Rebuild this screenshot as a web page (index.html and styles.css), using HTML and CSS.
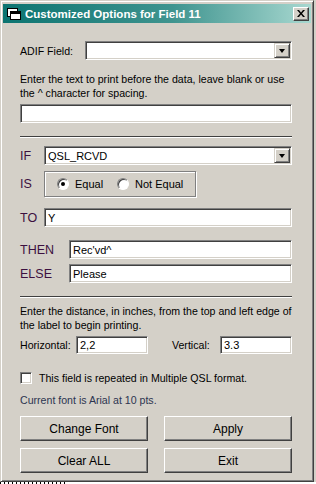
FILE: index.html
```html
<!DOCTYPE html>
<html lang="en">

<head>
  <meta charset="UTF-8" />
  <title>Customized Options for Field 11</title>
  <link rel="stylesheet" href="styles.css">
</head>

<body>
  <div class="desk">
    <div class="window">
      <div class="titlebar">
        <svg class="ticon" width="14" height="12" viewBox="0 0 14 12">
          <rect x="0.5" y="0.5" width="10" height="8" fill="#fff" stroke="#000" />
          <rect x="3.5" y="3.5" width="10" height="8" fill="#fff" stroke="#000" />
          <rect x="4" y="4" width="9" height="2" fill="#000" />
        </svg>
        <span class="title">Customized Options for Field 11</span>
        <span class="close">
          <svg width="8" height="7" viewBox="0 0 8 7">
            <path d="M0 0h2l2 2.5L6 0h2L5 3.5 8 7H6L4 4.5 2 7H0l3-3.5z" fill="#000" />
          </svg>
        </span>
      </div>

      <div class="content">
        <div class="row adif">
          <label class="lbl-adif">ADIF Field:</label>
          <div class="combo"><span class="val"></span><span class="arrow"></span></div>
        </div>

        <p class="note first">Enter the text to print before the data, leave blank or use<br>the ^ character for spacing.</p>
        <div class="field wide"></div>

        <div class="sep sep1"></div>

        <div class="row cond if">
          <label class="key">IF</label>
          <div class="combo"><span class="val">QSL_RCVD</span><span class="arrow"></span></div>
        </div>

        <div class="row cond is">
          <label class="key">IS</label>
          <div class="group">
            <span class="opt opt-eq"><span class="radio on"></span>Equal</span>
            <span class="opt"><span class="radio"></span>Not Equal</span>
          </div>
        </div>

        <div class="row cond to">
          <label class="key">TO</label>
          <div class="field">Y</div>
        </div>

        <div class="row cond then">
          <label class="key long">THEN</label>
          <div class="field">Rec'vd^</div>
        </div>

        <div class="row cond else">
          <label class="key long">ELSE</label>
          <div class="field">Please</div>
        </div>

        <div class="sep sep2"></div>

        <p class="note second">Enter the distance, in inches, from the top and left edge of<br>the label to begin printing.</p>

        <div class="row pos">
          <label class="lbl-h">Horizontal:</label>
          <div class="field small">2,2</div>
          <label class="lbl-v">Vertical:</label>
          <div class="field small">3.3</div>
        </div>

        <div class="row check">
          <span class="box"></span>
          <span>This field is repeated in Multiple QSL format.</span>
        </div>

        <p class="curfont">Current font is Arial at 10 pts.</p>

        <div class="buttons">
          <button>Change Font</button>
          <button>Apply</button>
          <button>Clear ALL</button>
          <button>Exit</button>
        </div>
      </div>
    </div>
    <div class="floor"></div>
  </div>
</body>

</html>
```

FILE: styles.css
```css
* {
  box-sizing: border-box;
}

html,
body {
  margin: 0;
}

body {
  background: #d4d0c8;
  font-family: "Liberation Sans", Arial, sans-serif;
  font-size: 10.6px;
  color: #000;
  overflow: hidden;
}

.desk {
  width: 316px;
  height: 484px;
  display: flex;
  flex-direction: column;
}

.window {
  width: 314px;
  height: 482px;
  flex-shrink: 0;
  background: #d4d0c8;
  border: 1px solid;
  border-color: #d4d0c8 #404040 #404040 #d4d0c8;
  box-shadow: inset 1px 1px #fff, inset -1px -1px #808080;
  padding: 3px 2px;
  display: flex;
  flex-direction: column;
}

.floor {
  height: 2px;
  width: 316px;
  flex-shrink: 0;
  background: #fff;
  background-image: repeating-linear-gradient(to right, #000 0 1px, #fff 1px 4px);
  background-size: 68px 2px;
  background-repeat: no-repeat;
}

/* title bar */
.titlebar {
  height: 19px;
  flex-shrink: 0;
  background: linear-gradient(to right, #0c7471, #3f948f 55%, #a8d8d0);
  display: flex;
  align-items: center;
  padding: 0 2px 0 4px;
}

.ticon {
  flex-shrink: 0;
}

.title {
  color: #fff;
  font-weight: bold;
  font-size: 11.5px;
  margin-left: 4px;
  flex: 1;
  white-space: nowrap;
}

.close {
  width: 16px;
  height: 14px;
  background: #d4d0c8;
  border: 1px solid;
  border-color: #fff #404040 #404040 #fff;
  box-shadow: inset -1px -1px #808080;
  display: flex;
  align-items: center;
  justify-content: center;
}

/* content */
.content {
  padding: 0 19px 0 17px;
  display: flex;
  flex-direction: column;
}

.row {
  display: flex;
  align-items: center;
  white-space: nowrap;
}

.adif {
  margin-top: 18px;
}

.lbl-adif {
  width: 65px;
  flex-shrink: 0;
}

.combo,
.field {
  height: 19px;
  flex-shrink: 0;
  background: #fff;
  border: 1px solid;
  border-color: #808080 #fff #fff #808080;
  box-shadow: inset 1px 1px #404040, inset -1px -1px #d4d0c8;
  display: flex;
  align-items: center;
  padding: 0 2px 0 3px;
  flex: 1;
  font-size: 11px;
}

.combo .val {
  flex: 1;
}

.arrow {
  width: 16px;
  height: 15px;
  background: #d4d0c8;
  border: 1px solid;
  border-color: #d4d0c8 #404040 #404040 #d4d0c8;
  box-shadow: inset 1px 1px #fff, inset -1px -1px #808080;
  margin-right: -1px;
  display: flex;
  align-items: center;
  justify-content: center;
}

.arrow::after {
  content: "";
  border-left: 3.5px solid transparent;
  border-right: 3.5px solid transparent;
  border-top: 4px solid #000;
  margin-top: 1px;
}

.note {
  margin: 0;
  line-height: 14px;
  white-space: nowrap;
}

.note.first {
  margin-top: 12px;
}

.field.wide {
  flex: none;
  margin-top: 4px;
}

.sep {
  height: 2px;
  flex-shrink: 0;
  border-top: 1px solid #404040;
  border-bottom: 1px solid #fff;
}

.sep1 {
  margin-top: 13px;
}

.sep2 {
  margin-top: 13px;
}

.key {
  width: 24px;
  flex-shrink: 0;
  color: #3c1040;
  font-size: 12.5px;
}

.key.long {
  width: 49px;
}

.if {
  margin-top: 8px;
}

.is {
  margin-top: 6px;
}

.to {
  margin-top: 11px;
}

.then {
  margin-top: 13px;
}

.else {
  margin-top: 5px;
}

.group {
  width: 152px;
  height: 26px;
  border: 1px solid #808080;
  box-shadow: 1px 1px #fff, inset 1px 1px #fff;
  display: flex;
  align-items: center;
  padding-left: 12px;
  font-size: 11px;
}

.opt {
  display: flex;
  align-items: center;
  gap: 6px;
}

.opt-eq {
  width: 60px;
}

.radio {
  width: 12px;
  height: 12px;
  border-radius: 50%;
  background: #fff;
  border: 1px solid;
  border-color: #808080 #fff #fff #808080;
  box-shadow: inset 1px 1px #404040;
  position: relative;
}

.radio.on::after {
  content: "";
  position: absolute;
  width: 4px;
  height: 4px;
  border-radius: 50%;
  background: #000;
  left: 3px;
  top: 3px;
}

.note.second {
  margin-top: 6px;
}

.pos {
  margin-top: 4px;
}

.lbl-h {
  width: 56px;
}

.lbl-v {
  width: 48px;
  margin-left: 24px;
}

.field.small {
  flex: none;
  width: 72px;
  height: 18px;
}

.check {
  margin-top: 17px;
  height: 13px;
  gap: 7px;
}

.box {
  width: 12px;
  height: 12px;
  background: #fff;
  border: 1px solid;
  border-color: #808080 #fff #fff #808080;
  box-shadow: inset 1px 1px #404040, inset -1px -1px #d4d0c8;
}

.curfont {
  margin: 9px 0 0;
  line-height: 14px;
  color: #2c3550;
}

.buttons {
  margin-top: 9px;
  display: grid;
  grid-template-columns: 128px 128px;
  column-gap: 16px;
  row-gap: 7px;
}

.buttons button {
  height: 25px;
  font-family: inherit;
  font-size: 12px;
  color: #000;
  background: #d4d0c8;
  border: 1px solid;
  border-color: #fff #404040 #404040 #fff;
  box-shadow: inset -1px -1px #808080;
  padding: 0;
}
```
